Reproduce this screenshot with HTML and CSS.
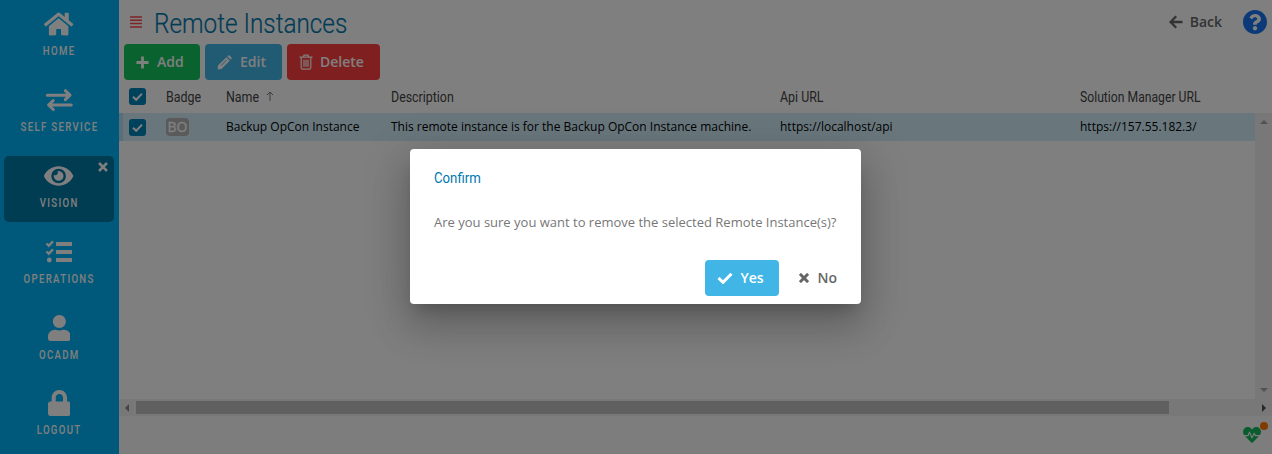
FILE: index.html
```html
<!DOCTYPE html>
<html lang="en">
<head>
<meta charset="utf-8">
<title>Remote Instances</title>
<link rel="stylesheet" href="styles.css">
</head>
<body>
<div class="app">
  <nav class="sidebar">
    <a class="nav-item"><svg class="nav-icon" viewBox="0 0 576 512"><path d="M280.37 148.26L96 300.11V464a16 16 0 0 0 16 16l112.06-.29a16 16 0 0 0 15.92-16V368a16 16 0 0 1 16-16h64a16 16 0 0 1 16 16v95.64a16 16 0 0 0 16 16.05L464 480a16 16 0 0 0 16-16V300L295.67 148.26a12.19 12.19 0 0 0-15.3 0zM571.6 251.47L488 182.56V44.05a12 12 0 0 0-12-12h-56a12 12 0 0 0-12 12v72.61L318.47 43a48 48 0 0 0-61 0L4.34 251.47a12 12 0 0 0-1.6 16.9l25.5 31A12 12 0 0 0 45.15 301l235.22-193.74a12.19 12.19 0 0 1 15.3 0L530.9 301a12 12 0 0 0 16.9-1.6l25.5-31a12 12 0 0 0-1.7-16.93z"/></svg><span class="nav-label">HOME</span></a>
    <a class="nav-item"><svg class="nav-icon" viewBox="0 0 30 26"><path class="line" d="M3.3 8.2H26M21.3 3.7L26 8.2L21.3 12.7M27.3 18H4.6M9.300 13.500L4.600 18L9.300 22.500"/></svg><span class="nav-label">SELF SERVICE</span></a>
    <a class="nav-item active"><svg class="nav-icon" viewBox="0 0 576 512"><path d="M572.52 241.4C518.29 135.59 410.93 64 288 64S57.68 135.64 3.48 241.41a32.35 32.35 0 0 0 0 29.19C57.71 376.41 165.07 448 288 448s230.32-71.64 284.52-177.41a32.35 32.35 0 0 0 0-29.19zM288 400a144 144 0 1 1 144-144 143.93 143.93 0 0 1-144 144zm0-240a95.31 95.31 0 0 0-25.31 3.79 47.85 47.85 0 0 1-66.9 66.9A95.78 95.78 0 1 0 288 160z"/></svg><span class="nav-label">VISION</span><svg class="nav-close" viewBox="0 0 10 10"><path d="M1 1L9 9M9 1L1 9"/></svg></a>
    <a class="nav-item"><svg class="nav-icon" viewBox="0 0 30 26"><path d="M12 3h16v4h-16zM12 11h16v4h-16zM12 19h16v4h-16z"/><circle cx="5.300" cy="21" r="2.400"/><path class="line thin" d="M2.500 4.500L4.800 6.700L9 2.200M2.500 12.500L4.800 14.700L9 10.200"/></svg><span class="nav-label">OPERATIONS</span></a>
    <a class="nav-item"><svg class="nav-icon" viewBox="0 0 448 512"><path d="M224 256c70.7 0 128-57.3 128-128S294.7 0 224 0 96 57.3 96 128s57.3 128 128 128zm89.6 32h-16.7c-22.2 10.2-46.9 16-72.9 16s-50.6-5.8-72.9-16h-16.7C60.2 288 0 348.2 0 422.4V464c0 26.500 21.500 48 48 48h352c26.500 0 48-21.500 48-48v-41.600c0-74.200-60.200-134.400-134.400-134.400z"/></svg><span class="nav-label">OCADM</span></a>
    <a class="nav-item last"><svg class="nav-icon" viewBox="0 0 448 512"><path d="M400 224h-24v-72C376 68.200 307.800 0 224 0S72 68.200 72 152v72H48c-26.500 0-48 21.500-48 48v192c0 26.500 21.500 48 48 48h352c26.500 0 48-21.500 48-48V272c0-26.500-21.500-48-48-48zm-104 0H152v-72c0-39.700 32.300-72 72-72s72 32.300 72 72v72z"/></svg><span class="nav-label">LOGOUT</span></a>
  </nav>
  <main class="main">
    <header class="header">
      <svg class="burger" viewBox="0 0 12 12"><path d="M0 1h12M0 4.300h12M0 7.600h12M0 11h12"/></svg>
      <h1 class="title"><span class="narrow">Remote Instances</span></h1>
      <a class="back"><svg viewBox="0 0 14 14"><path d="M13.500 7H2M7.200 1.300L1.600 7L7.200 12.700"/></svg><span>Back</span></a>
      <svg class="help" viewBox="8 8 496 496"><circle class="help-mark" cx="256" cy="256" r="200"/><path d="M504 256c0 136.997-111.043 248-248 248S8 392.997 8 256C8 119.083 119.043 8 256 8s248 111.083 248 248zM262.655 90c-54.497 0-89.255 22.957-116.549 63.758-3.536 5.286-2.353 12.415 2.715 16.258l34.699 26.310c5.205 3.947 12.621 3.008 16.665-2.122 17.864-22.658 30.113-35.797 57.303-35.797 20.429 0 45.698 13.148 45.698 32.958 0 14.976-12.363 22.667-32.534 33.976C247.128 238.528 216 254.941 216 296v4c0 6.627 5.373 12 12 12h56c6.627 0 12-5.373 12-12v-1.333c0-28.462 83.186-29.647 83.186-106.667 0-58.002-60.165-102-116.531-102zM256 338c-25.365 0-46 20.635-46 46 0 25.364 20.635 46 46 46s46-20.636 46-46c0-25.365-20.635-46-46-46z"/></svg>
    </header>
    <div class="toolbar">
      <button class="btn add"><svg viewBox="0 0 14 14"><path d="M7 .5v13M.5 7h13"/></svg><span>Add</span></button>
      <button class="btn edit"><svg class="pencil" viewBox="0 0 16 16"><path d="M1 11.300L10 2.300L13.700 6L4.700 15L.7 15.400zM10.900 1.400L12 .4Q12.700 0 13.400.5L15.500 2.600Q16 3.300 15.500 4L14.600 5.100z"/><path class="cut" d="M4.300 11.200L10.300 5.200"/></svg><span>Edit</span></button>
      <button class="btn delete"><svg class="trash" viewBox="0 0 14 16"><path d="M.5 3.200h13M4.300 3L5 1.200h4L9.700 3M2.200 3.500V13.500Q2.200 15.200 3.700 15.200H10.300Q11.800 15.200 11.800 13.500V3.500M5 5.800V12.800M7 5.800V12.800M9 5.800V12.800"/></svg><span>Delete</span></button>
    </div>
    <section class="grid">
      <div class="row head">
        <div class="check"><svg viewBox="0 0 17 17"><path d="M4 8.700L7.200 11.800L13 5.600"/></svg></div>
        <div><span class="narrow">Badge</span></div>
        <div><span class="narrow">Name</span><svg class="sort" viewBox="0 0 8 10"><path d="M4 10V1M1 4L4 1L7 4"/></svg></div>
        <div><span class="narrow">Description</span></div>
        <div><span class="narrow">Api URL</span></div>
        <div><span class="narrow wide-label">Solution Manager URL</span></div>
      </div>
      <div class="grid-body">
        <div class="rows">
          <div class="row selected">
            <div class="check"><svg viewBox="0 0 17 17"><path d="M4 8.700L7.200 11.800L13 5.600"/></svg></div>
            <div><span class="badge">BO</span></div>
            <div class="cell">Backup OpCon Instance</div>
            <div class="cell">This remote instance is for the Backup OpCon Instance machine.</div>
            <div class="cell">https://localhost/api</div>
            <div class="cell">https://157.55.182.3/</div>
          </div>
        </div>
        <div class="vscroll"><i class="tri up"></i><i class="tri down"></i></div>
      </div>
      <div class="hscroll"><i class="tri left"></i><div class="thumb"></div><i class="tri right"></i></div>
    </section>
    <footer class="footer">
      <div class="health"><svg viewBox="0 0 512 512"><path d="M320.200 243.800l-49.700 99.400c-6 12.100-23.400 11.700-28.900-.6l-56.900-126.300-30 71.700H60.600l182.500 186.500c7.100 7.300 18.600 7.300 25.700 0L451.400 288H342.300l-22.100-44.200zM473.700 73.900l-2.400-2.500c-51.500-52.600-135.800-52.600-187.400 0L256 100l-27.900-28.500c-51.500-52.700-135.900-52.700-187.400 0l-2.400 2.400C-10.400 123.700-12.500 203 31 256h102.400l35.900-86.200c5.400-12.900 23.600-13.100 29.200-.4l58.200 129.300 49-97.900c5.900-11.800 22.700-11.800 28.600 0l27.600 55.200H481c43.500-53 41.400-132.300-7.300-182.100z"/></svg><i class="dot"></i></div>
    </footer>
  </main>
</div>
<div class="overlay">
  <div class="dialog">
    <h2 class="dialog-title"><span class="narrow">Confirm</span></h2>
    <p class="message">Are you sure you want to remove the selected Remote Instance(s)?</p>
    <div class="actions">
      <button class="btn yes"><svg viewBox="0 0 16 12"><path d="M1.500 6L6 10.300L14.500 1.700"/></svg><span>Yes</span></button>
      <button class="btn no"><svg viewBox="0 0 10 10"><path d="M.9.9L9.100 9.100M9.100.9L.9 9.100"/></svg><span>No</span></button>
    </div>
  </div>
</div>
</body>
</html>
```

FILE: styles.css
```css
* { box-sizing: border-box; }
body { margin: 0; overflow: hidden; font: 13px "Open Sans", sans-serif; color: #000; }
svg { display: block; flex: none; }
h1, h2, p { margin: 0; font-weight: 400; }
.app { display: flex; width: 1272px; height: 454px; background: #fff; }

.sidebar { width: 119px; padding: 4px 5px 0 4px; background: #00b2f4; display: flex; flex-direction: column; gap: 10px; }
.nav-item { position: relative; height: 66px; border-radius: 5px; padding-top: 7px; display: flex; flex-direction: column; align-items: center; gap: 6px; }
.nav-item.last { margin-top: -1px; }
.nav-item.active { background: #0078a5; }
.nav-icon { height: 26px; fill: #fff; }
.line { fill: none; stroke: #fff; stroke-width: 3; stroke-linecap: round; stroke-linejoin: round; }
.line.thin { stroke-width: 2.4; stroke-linecap: butt; stroke-linejoin: miter; }
.nav-label { font: 500 12.5px/16px Roboto, sans-serif; letter-spacing: 1.7px; color: #fff; transform: scaleX(.77); white-space: nowrap; }
.nav-close { position: absolute; top: 6px; right: 6px; width: 10px; height: 10px; stroke: #fff; stroke-width: 2.5; }

.main { flex: 1; min-width: 0; display: flex; flex-direction: column; }
.narrow { display: inline-block; transform-origin: 0 50%; white-space: nowrap; }
.header { height: 44px; display: flex; align-items: center; padding: 0 5px 0 11px; }
.burger { width: 12px; height: 12px; stroke: #ff4a4a; stroke-width: 1.5; margin-right: 12px; }
.title { flex: 1; font: 300 27px/40px Roboto, sans-serif; color: #0078ad; padding-top: 4px; -webkit-text-stroke: .2px #0078ad; }
.title .narrow { transform: scaleX(.9); }
.back { display: flex; align-items: center; gap: 7px; margin-right: 21px; font-weight: 600; font-size: 14px; color: #666; }
.back span, .btn span { padding-bottom: 2px; }
.back svg { width: 14px; height: 14px; fill: none; stroke: #666; stroke-width: 2.3; }
.help { width: 24px; height: 24px; fill: #1872f0; }
.help-mark { fill: #fff; }

.toolbar { display: flex; gap: 5px; padding-left: 5px; height: 36px; }
.btn { height: 36px; border: 0; border-radius: 4px; padding: 0 12px; display: flex; align-items: center; font: 600 14px "Open Sans", sans-serif; color: #fff; }
.btn svg { fill: none; stroke: #fff; stroke-width: 3; }
.add { width: 76px; background: #14c45e; gap: 8px; }
.add svg { width: 13px; height: 13px; }
.edit { width: 77px; background: #41b5e6; gap: 8px; }
.btn .pencil { width: 15px; height: 15px; fill: #fff; stroke: none; }
.btn .cut { stroke: #41b5e6; stroke-width: 1; }
.delete { width: 93px; background: #ff3e3e; gap: 7px; }
.btn .trash { width: 14px; height: 16px; stroke-width: 1.2; }

.grid { height: 336px; display: flex; flex-direction: column; }
.row { display: grid; grid-template-columns: 47px 60px 165px 389px 300px 1fr; align-items: center; white-space: nowrap; }
.head { height: 33px; font: 400 14.5px Roboto, sans-serif; color: #444; }
.head > div { display: flex; align-items: center; }
.head .narrow { transform: scaleX(.855); padding-top: 2px; }
.head .wide-label { transform: scaleX(.84); }
.sort { width: 8px; height: 10px; margin-left: 1px; margin-bottom: 1px; fill: none; stroke: #777; }
.check { padding-left: 10px; }
.check svg { width: 17px; height: 17px; border-radius: 3px; background: #0082b8; fill: none; stroke: #fff; stroke-width: 2; }
.grid-body { flex: 1; display: flex; }
.rows { flex: 1; }
.selected { height: 28px; background: linear-gradient(#b4dcf0, #b4dcf0) 0 0 / 4px 100% no-repeat #d3eefb; font-size: 12px; }
.cell { padding-bottom: 2px; }
.badge { display: block; width: 23px; height: 18px; border-radius: 4px; background: #b5b5b5; color: #fff; font: 14px/18px "Open Sans", sans-serif; text-align: center; -webkit-text-stroke: .3px #fff; }
.vscroll { width: 17px; background: #f1f1f1; display: flex; flex-direction: column; align-items: center; justify-content: space-between; padding: 7px 0 7px; }
.hscroll { height: 17px; background: #f1f1f1; display: flex; align-items: center; padding: 0 6px 0 6px; }
.thumb { width: 1033px; height: 13px; background: #c1c1c1; margin: 0 auto 0 7px; }
.tri { border: 4px solid transparent; }
.up { border-top: 0; border-bottom-color: #a3a3a3; }
.down { border-bottom: 0; border-top-color: #a3a3a3; }
.left { border-left: 0; border-right-color: #888; }
.right { border-right: 0; border-left-color: #505050; }

.footer { flex: 1; background: #fafafa; display: flex; justify-content: flex-end; padding: 10px 5px 0 0; }
.health { position: relative; width: 24px; height: 18px; }
.health svg { width: 18px; height: 18px; fill: #14b85e; }
.dot { position: absolute; right: -1px; top: -4px; width: 8px; height: 8px; border-radius: 50%; background: #ff7800; }

.overlay { position: absolute; top: 0; left: 0; width: 1272px; height: 454px; background: rgba(0, 0, 0, .5); display: flex; align-items: flex-start; justify-content: center; padding: 149px 1px 0 0; }
.dialog { width: 451px; height: 155px; border-radius: 4px; background: #fff; padding: 19px 24px 8px; display: flex; flex-direction: column; box-shadow: 0 11px 15px -7px rgba(0, 0, 0, .2), 0 24px 38px 3px rgba(0, 0, 0, .14), 0 9px 46px 8px rgba(0, 0, 0, .12); }
.dialog-title { font: 400 15px/21px Roboto, sans-serif; color: #0078ad; }
.dialog-title .narrow { transform: scaleX(.88); }
.message { margin-top: 23px; line-height: 20px; color: #777; white-space: nowrap; }
.actions { margin-top: auto; display: flex; justify-content: flex-end; gap: 7px; }
.yes { width: 74px; background: #41b5e6; gap: 7px; }
.yes svg { width: 16px; height: 12px; }
.no { background: none; color: #666; gap: 8px; padding: 0 0 0 13px; }
.no svg { width: 10px; height: 10px; stroke: #666; }
```
